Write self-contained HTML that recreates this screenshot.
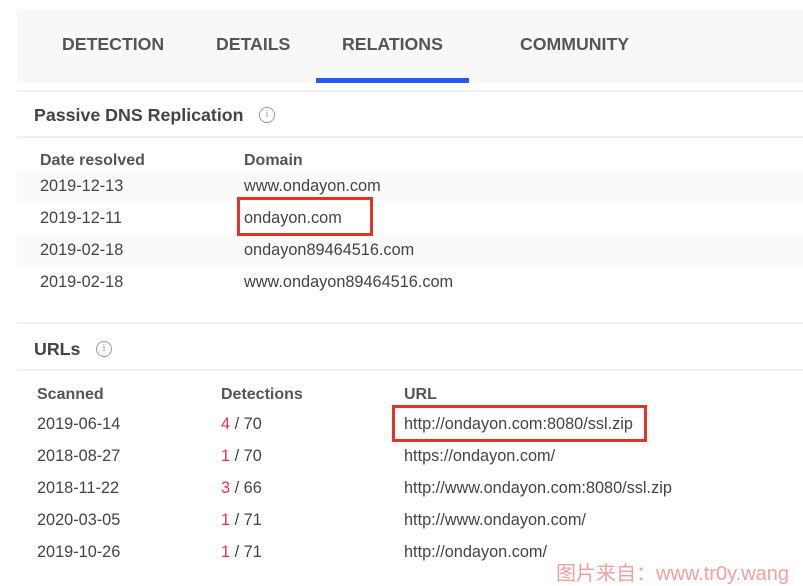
<!DOCTYPE html>
<html><head><meta charset="utf-8"><style>
*{margin:0;padding:0;box-sizing:border-box}
body{width:803px;height:583px;background:#fff;position:relative;overflow:hidden;font-family:"Liberation Sans",Arial,sans-serif;color:#444}
.a{position:absolute;white-space:nowrap}
.tab{font-size:17.7px;font-weight:bold;color:#555;top:34px}
.h{font-size:17.8px;font-weight:bold;color:#444}
.th{font-size:16px;font-weight:bold;color:#555}
.td{font-size:16.3px;color:#444}
.r{color:#e8334f}
.line{position:absolute;left:17px;right:0;height:2px;background:#f0f0f0}
.info{position:absolute;width:16px;height:16px;border:1px solid #999;border-radius:50%;font-size:10px;color:#999;text-align:center;line-height:14px;font-family:"Liberation Serif",serif}
.box{position:absolute;border:3px solid #e1332a}
</style></head><body>
<div style="position:absolute;left:17px;top:10px;right:0;height:73px;background:#f8f8f8"></div>
<div class="a tab" style="left:62px">DETECTION</div>
<div class="a tab" style="left:216px">DETAILS</div>
<div class="a tab" style="left:342px">RELATIONS</div>
<div class="a tab" style="left:520px">COMMUNITY</div>
<div style="position:absolute;left:316px;top:78px;width:153px;height:5px;background:#2b59f0"></div>
<div class="line" style="top:90px"></div>
<div class="a h" style="left:34px;top:105px">Passive DNS Replication</div>
<div class="info" style="left:259px;top:107px">i</div>
<div class="line" style="top:136px"></div>
<div class="a th" style="left:40px;top:152px">Date resolved</div>
<div class="a th" style="left:244px;top:152px">Domain</div>
<div style="position:absolute;left:17px;right:0;top:170px;height:31px;background:#fafafa"></div>
<div style="position:absolute;left:17px;right:0;top:234px;height:31px;background:#fafafa"></div>
<div class="a td" style="left:40px;top:177px">2019-12-13</div><div class="a td" style="left:244px;top:177px">www.ondayon.com</div>
<div class="a td" style="left:40px;top:209px">2019-12-11</div><div class="a td" style="left:244px;top:209px">ondayon.com</div>
<div class="a td" style="left:40px;top:241px">2019-02-18</div><div class="a td" style="left:244px;top:241px">ondayon89464516.com</div>
<div class="a td" style="left:40px;top:273px">2019-02-18</div><div class="a td" style="left:244px;top:273px">www.ondayon89464516.com</div>
<div class="box" style="left:237px;top:197px;width:136px;height:39px"></div>
<div class="line" style="top:322px"></div>
<div class="a h" style="left:34px;top:339px">URLs</div>
<div class="info" style="left:96px;top:341px">i</div>
<div class="line" style="top:369px"></div>
<div class="a th" style="left:37px;top:386px">Scanned</div>
<div class="a th" style="left:221px;top:386px">Detections</div>
<div class="a th" style="left:404px;top:386px">URL</div>
<div class="a td" style="left:37px;top:415px">2019-06-14</div><div class="a td" style="left:221px;top:415px"><span class="r">4</span> / 70</div><div class="a td" style="left:404px;top:415px">http://ondayon.com:8080/ssl.zip</div>
<div class="a td" style="left:37px;top:447px">2018-08-27</div><div class="a td" style="left:221px;top:447px"><span class="r">1</span> / 70</div><div class="a td" style="left:404px;top:447px">https://ondayon.com/</div>
<div class="a td" style="left:37px;top:479px">2018-11-22</div><div class="a td" style="left:221px;top:479px"><span class="r">3</span> / 66</div><div class="a td" style="left:404px;top:479px">http://www.ondayon.com:8080/ssl.zip</div>
<div class="a td" style="left:37px;top:511px">2020-03-05</div><div class="a td" style="left:221px;top:511px"><span class="r">1</span> / 71</div><div class="a td" style="left:404px;top:511px">http://www.ondayon.com/</div>
<div class="a td" style="left:37px;top:543px">2019-10-26</div><div class="a td" style="left:221px;top:543px"><span class="r">1</span> / 71</div><div class="a td" style="left:404px;top:543px">http://ondayon.com/</div>
<div class="box" style="left:392px;top:405px;width:255px;height:37px"></div>
<div class="a" style="left:556px;top:557px;font-size:20px;color:#f4a0a0;font-family:'Liberation Sans','Noto Sans CJK SC',sans-serif">图片来自：www.tr0y.wang</div>
</body></html>
